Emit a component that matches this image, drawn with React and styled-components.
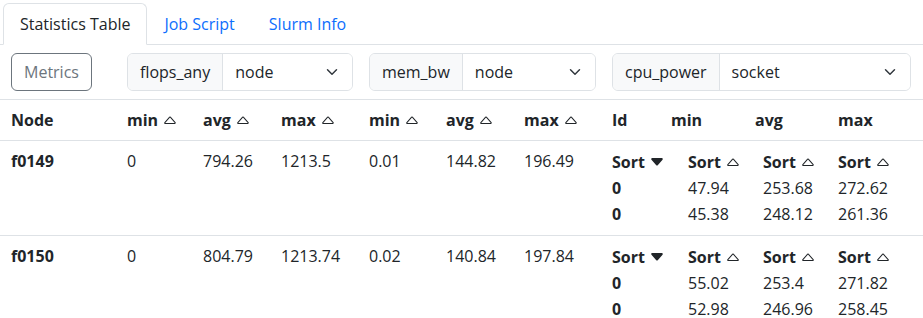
import React from "react";
import styled, { createGlobalStyle } from "styled-components";

const GlobalStyle = createGlobalStyle`
  *, *::before, *::after {
    box-sizing: border-box;
  }
  body {
    margin: 0;
    font-family: "Open Sans", "Noto Sans", sans-serif;
    font-size: 16px;
    line-height: 24px;
    color: #212529;
    background: #fff;
  }
`;

const COLS = "116px 76px 78px 88px 77px 78px 88px 315px";

const stats = [
  {
    node: "f0149",
    cells: ["0", "794.26", "1213.5", "0.01", "144.82", "196.49"],
    sockets: [
      ["0", "47.94", "253.68", "272.62"],
      ["0", "45.38", "248.12", "261.36"],
    ],
  },
  {
    node: "f0150",
    cells: ["0", "804.79", "1213.74", "0.02", "140.84", "197.84"],
    sockets: [
      ["0", "55.02", "253.4", "271.82"],
      ["0", "52.98", "246.96", "258.45"],
    ],
  },
];

function CaretUp() {
  return (
    <Icon viewBox="0 0 16 16">
      <path d="M3.204 11h9.592L8 5.519zm-.753-.659 4.796-5.48a1 1 0 0 1 1.506 0l4.796 5.48c.566.647.106 1.659-.753 1.659H3.204a1 1 0 0 1-.753-1.659" />
    </Icon>
  );
}

function CaretDownFill() {
  return (
    <Icon viewBox="0 0 16 16">
      <path d="M7.247 11.14 2.451 5.658C1.885 5.013 2.345 4 3.204 4h9.592a1 1 0 0 1 .753 1.659l-4.796 5.48a1 1 0 0 1-1.506 0z" />
    </Icon>
  );
}

function Chevron() {
  return (
    <ChevronSvg viewBox="0 0 16 16">
      <path d="m2 5 6 6 6-6" fill="none" stroke="#343a40" strokeWidth="2" strokeLinecap="round" strokeLinejoin="round" />
    </ChevronSvg>
  );
}

function MetricSelect({ label, value }) {
  return (
    <InputGroup>
      <GroupText>{label}</GroupText>
      <Select>
        <span>{value}</span>
        <Chevron />
      </Select>
    </InputGroup>
  );
}

function SortHead({ children }) {
  return (
    <HeadLabel>
      {children}
      <CaretUp />
    </HeadLabel>
  );
}

export default function App() {
  return (
    <Page>
      <GlobalStyle />
      <Tabs>
        <Tab $active>Statistics Table</Tab>
        <Tab>Job Script</Tab>
        <Tab>Slurm Info</Tab>
      </Tabs>

      <Row>
        <Cell>
          <OutlineButton>Metrics</OutlineButton>
        </Cell>
        <Cell $span={3}>
          <MetricSelect label="flops_any" value="node" />
        </Cell>
        <Cell $span={3}>
          <MetricSelect label="mem_bw" value="node" />
        </Cell>
        <Cell>
          <MetricSelect label="cpu_power" value="socket" />
        </Cell>
      </Row>

      <Row>
        <HeadCell>Node</HeadCell>
        {["min", "avg", "max", "min", "avg", "max"].map((h, i) => (
          <HeadCell key={i}>
            <SortHead>{h}</SortHead>
          </HeadCell>
        ))}
        <HeadCell>
          <InnerHead>
            <span>Id</span>
            <span>min</span>
            <span>avg</span>
            <span>max</span>
          </InnerHead>
        </HeadCell>
      </Row>

      {stats.map((s) => (
        <Row key={s.node}>
          <Cell>
            <strong>{s.node}</strong>
          </Cell>
          {s.cells.map((c, i) => (
            <Cell key={i}>{c}</Cell>
          ))}
          <Cell>
            <Nested>
              <NestedHead>
                Sort
                <CaretDownFill />
              </NestedHead>
              <NestedHead>
                Sort
                <CaretUp />
              </NestedHead>
              <NestedHead>
                Sort
                <CaretUp />
              </NestedHead>
              <NestedHead>
                Sort
                <CaretUp />
              </NestedHead>
              {s.sockets.map((row, ri) =>
                row.map((v, ci) => (
                  <NestedCell key={`${ri}-${ci}`} $bold={ci === 0}>
                    {v}
                  </NestedCell>
                ))
              )}
            </Nested>
          </Cell>
        </Row>
      ))}
    </Page>
  );
}

const Page = styled.div`
  padding-top: 3px;
`;

const Tabs = styled.nav`
  display: flex;
  padding-left: 3px;
  border-bottom: 1px solid #dee2e6;
`;

const Tab = styled.div`
  padding: 8px 16px;
  margin-bottom: -1px;
  border: 1px solid transparent;
  border-radius: 6px 6px 0 0;
  color: #0d6efd;
  ${(p) =>
    p.$active &&
    `
    color: #212529;
    background: #fff;
    border-color: #dee2e6 #dee2e6 #fff;
  `}
`;

const Row = styled.div`
  display: grid;
  grid-template-columns: ${COLS};
  padding-left: 3px;
  border-bottom: 1px solid #dee2e6;
`;

const Cell = styled.div`
  padding: 8px;
  grid-column: span ${(p) => p.$span || 1};
  min-width: 0;
`;

const HeadCell = styled(Cell)`
  font-weight: 700;
`;

const HeadLabel = styled.span`
  display: inline-flex;
  align-items: center;
  gap: 4px;
  height: 24px;
`;

const Icon = styled.svg`
  width: 16px;
  height: 16px;
  fill: currentColor;
  flex-shrink: 0;
`;

const OutlineButton = styled.button`
  display: block;
  font: inherit;
  line-height: 24px;
  height: 38px;
  padding: 6px 12px;
  color: #6c757d;
  background: #fff;
  border: 1px solid #6c757d;
  border-radius: 6px;
`;

const InputGroup = styled.div`
  display: flex;
  height: 38px;
  border: 1px solid #dee2e6;
  border-radius: 6px;
  overflow: hidden;
`;

const GroupText = styled.div`
  display: flex;
  align-items: center;
  padding: 0 12px;
  background: #f8f9fa;
  border-right: 1px solid #dee2e6;
  white-space: nowrap;
`;

const Select = styled.div`
  flex: 1;
  display: flex;
  align-items: center;
  justify-content: space-between;
  padding: 0 12px;
  background: #fff;
`;

const ChevronSvg = styled.svg`
  width: 16px;
  height: 12px;
`;

const InnerHead = styled.div`
  display: grid;
  grid-template-columns: 59px 84px 83px auto;
`;

const Nested = styled.div`
  display: grid;
  grid-template-columns: 76px 75px 75px auto;
  grid-auto-rows: 26px;
  align-items: center;
`;

const NestedHead = styled.div`
  display: flex;
  align-items: center;
  gap: 4px;
  font-weight: 700;
`;

const NestedCell = styled.div`
  font-weight: ${(p) => (p.$bold ? 700 : 400)};
`;
